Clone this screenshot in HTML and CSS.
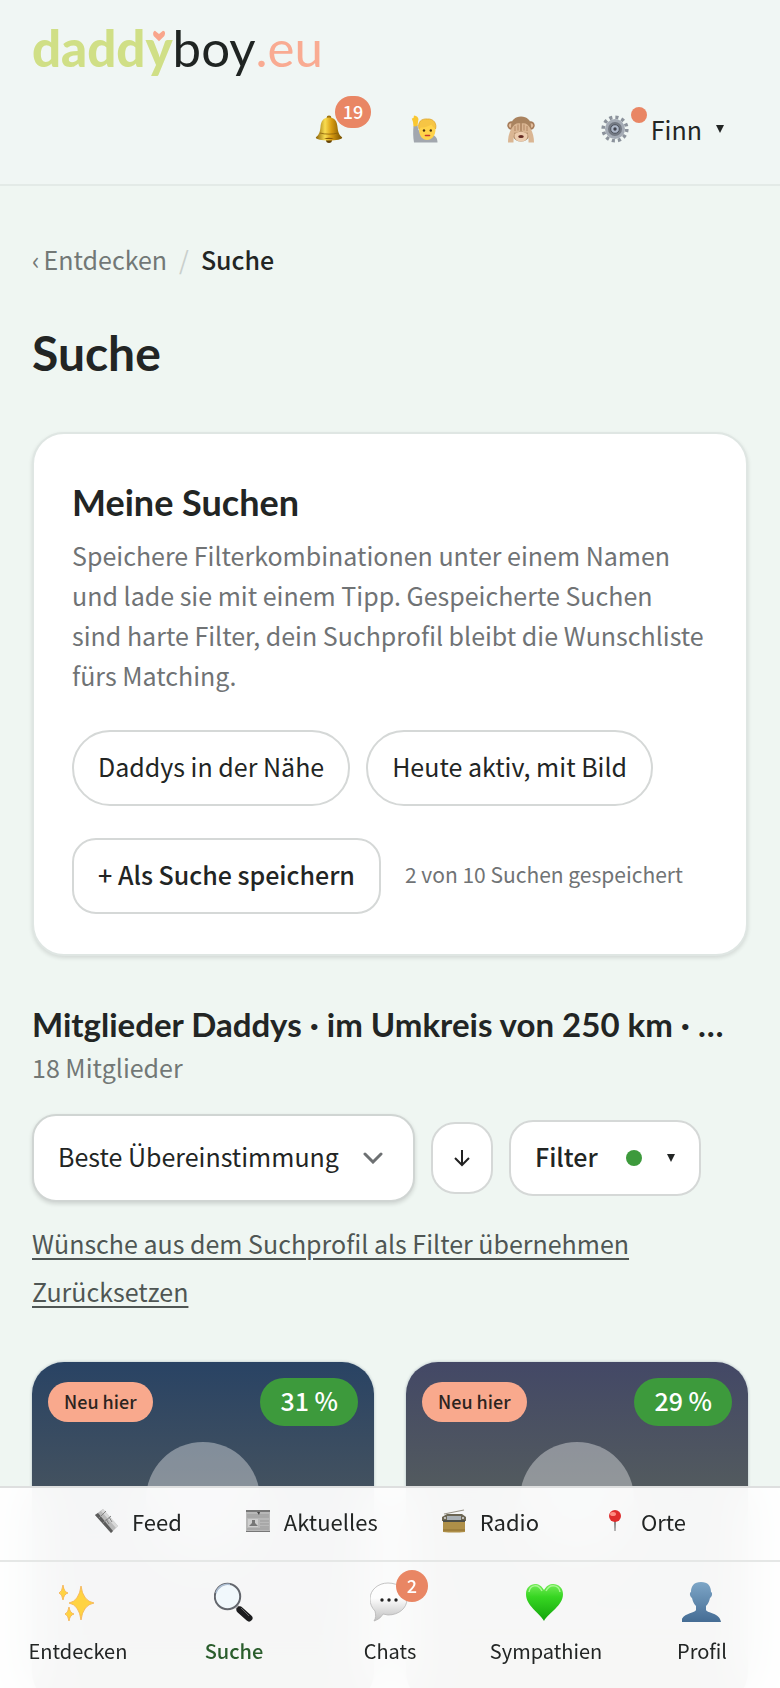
FILE: index.html
```html
<!DOCTYPE html>
<html lang="de">
<head>
<meta charset="utf-8">
<meta name="viewport" content="width=device-width, initial-scale=1">
<title>Suche – daddyboy.eu</title>
<link rel="stylesheet" href="styles.css">
</head>
<body>
<div class="app">
  <header class="header">
    <a class="logo" href="#"><span class="logo-daddy">daddy<svg class="logo-heart" viewBox="0 0 18 18" aria-hidden="true"><path d="M9 17 1 9C-1 5 1 1 3 1l6 5 6-5c3 0 4 4 2 8z" fill="#f9a58c"/></svg></span><span class="logo-boy">boy</span><span class="logo-eu">.eu</span></a>
    <div class="actions">
      <a class="action" href="#" aria-label="Benachrichtigungen">
        <svg class="icon" viewBox="0 0 28 28"><defs><linearGradient id="gold" x1="0" x2="1"><stop offset="0" stop-color="#8b6207"/><stop offset=".35" stop-color="#f9dc50"/><stop offset=".6" stop-color="#d89b10"/><stop offset="1" stop-color="#765000"/></linearGradient></defs><circle cx="14" cy="3" r="2.4" fill="#9b710f"/><circle cx="14" cy="25" r="3" fill="#654205"/><path d="M14 2.500c-6 0-8 4-8.500 9.500C5 18 3.500 20 .8 22.500c0 2 6 3 13.200 3s13.200-1 13.200-3C24.500 20 23 18 22.500 12 22 6.500 20 2.500 14 2.500z" fill="url(#gold)"/><path d="M5 18c5 1.500 13 1.500 18 0" fill="none" stroke="#8a5f0a" stroke-width=".8"/><path d="M9 24q5-2.500 10 0" fill="#8a5b09"/></svg>
        <span class="badge badge-bell">19</span>
      </a>
      <a class="action" href="#" aria-label="Anfragen">
        <svg class="icon" viewBox="0 0 28 28"><path d="M3 27.500C2 22 2 16 2.500 11l4-1c.5 5 2 8 5.500 9.500h8c5 1 6.500 4 6.500 8z" fill="#a2a7ae"/><path d="M2.500 11.500 2 7 .8 3.500 2.500 3l.5-2.500L5 1l1.500 1 1 2-.5 3-.5 4z" fill="#f9c731"/><path d="M8 14c0-6 3-9 8-9s8.500 3 8.500 9c0 7-4 11-8.500 11s-8-4-8-11z" fill="#ffd34a"/><path d="M8 14c-1.500-7 2-10.500 8.500-10C23 3.500 26 9 24.500 14c-2-1.500-3.500-3-4-4.500-4 2.500-8 3-10.500 3z" fill="#f6c544"/><path d="M8 14c-1.500-7 2-10.500 8.500-10C23 3.500 26 9 24.500 14" fill="none" stroke="#e0a325" stroke-width=".8"/><circle cx="13" cy="15.500" r="1.200" fill="#4a3010"/><circle cx="19.800" cy="15.500" r="1.200" fill="#4a3010"/><path d="M14.500 20.500h4" stroke="#c5392c" stroke-width="1.600" stroke-linecap="round"/></svg>
      </a>
      <a class="action" href="#" aria-label="Diskretmodus">
        <svg class="icon" viewBox="0 0 28 28"><circle cx="4.500" cy="10.500" r="4.200" fill="#a57a58"/><circle cx="23.500" cy="10.500" r="4.200" fill="#a57a58"/><circle cx="4" cy="10.500" r="2.200" fill="#e2bd9c"/><circle cx="24" cy="10.500" r="2.200" fill="#e2bd9c"/><path d="M4 12C4 5 8 1.500 14 1.500S24 5 24 12s-2 14.500-10 14.500S4 19 4 12z" fill="#a9835f"/><path d="M7.500 19q6.500-5 13 0v3q-1.500 4.500-6.500 4.500T7.500 22z" fill="#ecccae"/><path d="M1 27.500c0-5 1-10 3.500-14C7 9 10 7.500 13.500 8.500v7C12 18 9 18 7.500 17.500c-1 3-1 7-1 10z" fill="#dab693"/><path d="M27 27.500c0-5-1-10-3.500-14C21 9 18 7.500 14.500 8.500v7c1.500 2.500 4.500 2.500 6 2 1 3 1 7 1 10z" fill="#dab693"/><path d="M11 9.500v6m-3-4.500v5m9-6.500v6m3-4.500v5M14 8.500v7" stroke="#a07350" stroke-width=".7"/><ellipse cx="14" cy="21.500" rx="2.800" ry="1.500" fill="#652b22"/></svg>
      </a>
      <a class="action action-user" href="#">
        <span class="user-icon"><svg class="icon" viewBox="0 0 28 28" aria-hidden="true"><circle cx="14" cy="14" r="11.800" fill="none" stroke="#8b929b" stroke-width="3.600" stroke-dasharray="3.100 3.080"/><circle cx="14" cy="14" r="8.500" fill="#737983" stroke="#a4abb5" stroke-width="3"/><circle cx="14" cy="14" r="4.300" fill="#aeb8c9" stroke="#4e545f" stroke-width="1"/><circle cx="14" cy="14" r="1.700" fill="#41444f"/></svg><span class="user-dot"></span></span>
        <span class="user-name">Finn</span>
        <svg class="caret" viewBox="0 0 8 8" aria-hidden="true"><path d="M0 0h8L4 8z"/></svg>
      </a>
    </div>
  </header>

  <main class="content">
    <nav class="crumbs" aria-label="Brotkrumen"><a class="crumb-back" href="#"><span>‹</span><span>Entdecken</span></a><span class="crumb-sep">/</span><span class="crumb-here">Suche</span></nav>
    <h1 class="page-title">Suche</h1>

    <section class="panel">
      <h2 class="panel-title">Meine Suchen</h2>
      <p class="panel-text">Speichere Filterkombinationen unter einem Namen und lade sie mit einem Tipp. Gespeicherte Suchen sind harte Filter, dein Suchprofil bleibt die Wunschliste fürs Matching.</p>
      <div class="chips">
        <button class="chip" type="button">Daddys in der Nähe</button>
        <button class="chip" type="button">Heute aktiv, mit Bild</button>
      </div>
      <div class="save">
        <button class="btn" type="button">+ Als Suche speichern</button>
        <span class="save-note">2 von 10 Suchen gespeichert</span>
      </div>
    </section>

    <h2 class="result-title">Mitglieder Daddys · im Umkreis von 250 km · …</h2>
    <p class="result-count">18 Mitglieder</p>

    <div class="tools">
      <div class="sort">
        <select class="sort-select" aria-label="Sortierung"><option>Beste Übereinstimmung</option></select>
        <svg class="sort-chevron" viewBox="0 0 20 12" aria-hidden="true"><path d="m2 2 8 8 8-8" fill="none" stroke="#6d7072" stroke-width="3" stroke-linecap="round"/></svg>
      </div>
      <button class="btn-dir" type="button" aria-label="Absteigend"><svg class="arrow" viewBox="0 0 16 18"><path d="M8 1v15M1 9l7 7 7-7" fill="none" stroke="#222" stroke-width="2"/></svg></button>
      <button class="btn btn-filter" type="button"><span class="filter-label">Filter</span><span class="filter-dot"></span><svg class="caret" viewBox="0 0 8 8" aria-hidden="true"><path d="M0 0h8L4 8z"/></svg></button>
    </div>
    <div class="links">
      <a href="#">Wünsche aus dem Suchprofil als Filter übernehmen</a>
      <a href="#">Zurücksetzen</a>
    </div>

    <div class="members">
      <article class="member member-blue"><div class="member-top"><span class="tag">Neu hier</span><span class="match">31 %</span></div><div class="avatar"></div></article>
      <article class="member member-violet"><div class="member-top"><span class="tag">Neu hier</span><span class="match">29 %</span></div><div class="avatar"></div></article>
    </div>
  </main>
</div>

<div class="bottom">
  <nav class="subnav" aria-label="Inhalte">
    <a href="#"><svg class="icon-s" viewBox="0 0 24 24" aria-hidden="true"><path d="M1 6 9 0l15 17-7 7z" fill="#b9b9b9"/><path d="M1 6 17 24l2-2L4 4z" fill="#5b5b5b"/><path d="M9 0l15 17-2 2L7 2z" fill="#d9d9d9"/><path d="m5 9 7-7m-3 12 8-7m-5 3 3 5m0-7 3 5" stroke="#858585"/></svg>Feed</a>
    <a href="#"><svg class="icon-s" viewBox="0 0 24 24" aria-hidden="true"><path d="M0 1h24v22H0z" fill="#b8b8b8"/><path d="M0 1h24v2H0zM0 22h24v1H0z" fill="#777"/><path d="M1 6h22M1 8h22M14 12h9M14 15h9M14 18h9M1 20h22" stroke="#999"/><path d="M2 10h10v8H2z" fill="#cecece"/><path d="m3 17 3-3V11h3v3l3 3z" fill="#777"/><path d="M11 3h3l-1 3z" fill="#444"/></svg>Aktuelles</a>
    <a href="#"><svg class="icon-s" viewBox="0 0 24 24" aria-hidden="true"><path d="M2 5 22 1" stroke="#9b9689" stroke-width="1.200"/><path d="M5 5h15l4 3v4H0V8z" fill="#6c6653"/><path d="M1 11h22v12q-11 1-22 0z" fill="#ae8f48"/><path d="M1 11h22v2H1z" fill="#4c4d46"/><path d="M5 7h14v4H5z" fill="#aab1b5"/><path d="M1 21h22" stroke="#8e6f2e"/><circle cx="3" cy="9" r="1" fill="#ddd"/><circle cx="21" cy="9" r="1" fill="#ddd"/></svg>Radio</a>
    <a href="#"><svg class="icon-s" viewBox="0 0 24 24" aria-hidden="true"><path d="M11 10h2l-.5 12h-1z" fill="#777"/><circle cx="12" cy="7" r="6" fill="#df2d2d"/><ellipse cx="10" cy="5" rx="3" ry="2" fill="#ff8d83"/></svg>Orte</a>
  </nav>
  <nav class="tabs" aria-label="Hauptnavigation">
    <a href="#"><svg class="icon-l" viewBox="0 0 40 40" aria-hidden="true"><g fill="#ffd342" stroke="#f5a83c" stroke-width=".7"><path d="M23 4q2 15 13 17-11 2-13 17-2-15-12-17Q21 19 23 4z"/><path d="M5 3q1 7 5 8-4 1-5 7-1-6-4-7 3-1 4-8z"/><path d="M11 25q1 6 5 7-4 1-5 7-1-6-4-7 3-1 4-7z"/></g></svg>Entdecken</a>
    <a class="tab-on" href="#"><svg class="icon-l" viewBox="0 0 40 40" aria-hidden="true"><path d="m23 25 3 3" stroke="#777" stroke-width="4"/><path d="m26 28 9 8" stroke="#1c1c1e" stroke-width="7" stroke-linecap="round"/><path d="m27 26 8 8" stroke="#666" stroke-width="1"/><circle cx="13.500" cy="14.500" r="12.700" fill="#f1f8fc" stroke="#63666d" stroke-width="2"/><path d="M2 11A12 12 0 0 1 16 2.500" fill="none" stroke="#aebfd3" stroke-width="1.500"/></svg>Suche</a>
    <a href="#"><span class="chat"><svg class="icon-l" viewBox="0 0 40 40" aria-hidden="true"><defs><linearGradient id="bubble" x2="0" y2="1"><stop offset=".4" stop-color="#fdfdfd"/><stop offset="1" stop-color="#bfbfbf"/></linearGradient></defs><path d="M18 1c11 0 19 7 19 16s-8 16-19 16l-5-1c-2 4-6 6-9 7 2-3 2-6 1-10-3-3-5-7-5-12C0 8 8 1 18 1z" fill="url(#bubble)" stroke="#b5b5b5" stroke-width=".8"/><circle cx="12" cy="18" r="1.700" fill="#222"/><circle cx="19" cy="18" r="1.700" fill="#222"/><circle cx="26" cy="18" r="1.700" fill="#222"/></svg><span class="badge badge-chat">2</span></span>Chats</a>
    <a href="#"><svg class="icon-l" viewBox="0 0 40 40" aria-hidden="true"><defs><linearGradient id="green" x2="0" y2="1"><stop stop-color="#74ec58"/><stop offset=".35" stop-color="#37d622"/><stop offset="1" stop-color="#12a40c"/></linearGradient></defs><path d="M18 39C13 30 0 24 0 12 0 1 13-2 18 8 23-2 37 1 37 12c0 12-14 18-19 27z" fill="url(#green)"/><path d="M3 10c1-7 9-9 13-1M20 9c4-8 13-6 14 1" fill="none" stroke="#a7f792" stroke-width="1.500"/></svg>Sympathien</a>
    <a href="#"><svg class="icon-l" viewBox="0 0 40 40" aria-hidden="true"><defs><linearGradient id="bust" x2="0" y2="1"><stop stop-color="#7da6c7"/><stop offset="1" stop-color="#456c94"/></linearGradient></defs><path d="M19 0c7 0 10 4 10 10 2 1 1 5-1 6-1 4-2 6-4 8v4c1 3 14 3 15 12H-1c1-9 14-9 15-12v-4c-2-2-3-4-4-8-2-1-3-5-1-6C9 4 12 0 19 0z" fill="url(#bust)"/></svg>Profil</a>
  </nav>
</div>
</body>
</html>
```
FILE: styles.css
```css
* { box-sizing: border-box; }

body {
  margin: 0;
  background: #eff6f2;
  color: #222524;
  font: 25px/40px "Noto Sans CJK SC", "Noto Sans", sans-serif;
}

a { color: inherit; text-decoration: none; }
h1, h2, p { margin: 0; }
svg { display: block; flex: none; }
button, select { font: inherit; color: inherit; cursor: pointer; }

.app {
  height: 100vh;
  overflow-x: hidden;
  overflow-y: auto;
  scrollbar-width: none;
}

/* Header */
.header {
  padding: 16px 56px 16px 32px;
  border-bottom: 2px solid #e3eae7;
  background: #f0f6f4;
}

.logo {
  display: inline-flex;
  height: 64px;
  font: 51px/64px Lato, sans-serif;
}

.logo-daddy { position: relative; color: #d0df86; font-weight: 900; }
.logo-boy { color: #1f2422; }
.logo-eu { color: #f9ab92; }

.logo-heart {
  position: absolute;
  top: 14px;
  right: 8px;
  width: 12px;
  height: 12px;
}

.actions {
  display: flex;
  justify-content: flex-end;
  align-items: center;
  height: 88px;
  padding-top: 10px;
}

.action {
  position: relative;
  display: flex;
  justify-content: center;
  align-items: center;
  width: 96px;
}

.action-user { width: auto; padding-left: 32px; }
.user-icon { position: relative; margin-right: 22px; }
.user-name { margin-right: 14px; }
.icon { width: 28px; height: 28px; }
.caret { width: 8px; height: 8px; fill: #222524; }

.badge {
  position: absolute;
  height: 32px;
  min-width: 32px;
  border-radius: 16px;
  background: #e98664;
  color: #fff;
  font-size: 18px;
  font-weight: 500;
  line-height: 30px;
  text-align: center;
}

.badge-bell { top: -19px; left: 54px; padding: 0 8px; }

.user-dot {
  position: absolute;
  top: -8px;
  right: -18px;
  width: 16px;
  height: 16px;
  border-radius: 50%;
  background: #e98664;
}

/* Content */
.content { padding: 53px 32px 220px; }

.crumbs { display: flex; gap: 12px; color: #727876; }
.crumb-back { display: flex; gap: 4px; }
.crumb-sep { color: #c9cfcc; }
.crumb-here { color: #222524; font-weight: 500; }

.page-title {
  margin-top: 42px;
  font: 700 48px/64px Lato, sans-serif;
}

.panel {
  margin-top: 47px;
  padding: 40px 38px;
  border: 2px solid #dfe6e3;
  border-radius: 32px;
  background: #fff;
  box-shadow: 0 2px 4px rgba(0, 0, 0, .12);
}

.panel-title { font: 700 36px/56px Lato, sans-serif; }
.panel-text { margin-top: 5px; padding-right: 4px; color: #707375; }

.chips { display: flex; flex-wrap: wrap; gap: 16px; margin-top: 35px; }

.chip, .btn {
  height: 76px;
  padding: 0 24px 4px;
  border: 2px solid #d5d8d7;
  border-radius: 38px;
  background: #fff;
}

.btn { border-radius: 24px; font-weight: 500; }

.save { display: flex; align-items: center; gap: 24px; margin-top: 32px; }
.save-note { padding-bottom: 4px; color: #707375; font-size: 21px; }

.result-title {
  margin-top: 44px;
  font: 700 33px/48px Lato, sans-serif;
  white-space: nowrap;
}

.result-count { margin-top: -1px; color: #727876; }

.tools { display: flex; align-items: center; gap: 16px; margin-top: 27px; }

.sort { display: grid; align-items: center; }

.sort-select {
  grid-area: 1 / 1;
  height: 88px;
  padding: 0 74px 4px 24px;
  appearance: none;
  border: 2px solid #d0d5d3;
  border-radius: 24px;
  background: #fff;
  box-shadow: 0 2px 4px rgba(0, 0, 0, .14);
}

.sort-chevron {
  grid-area: 1 / 1;
  justify-self: end;
  width: 20px;
  height: 12px;
  margin-right: 32px;
  pointer-events: none;
}

.btn-dir {
  display: grid;
  place-items: center;
  width: 62px;
  height: 72px;
  padding: 0;
  border: 2px solid #d5d8d7;
  border-radius: 24px;
  background: #fff;
}

.arrow { width: 16px; height: 18px; }

.btn-filter { display: flex; align-items: center; padding-bottom: 0; }
.filter-label { padding-bottom: 4px; }

.filter-dot {
  width: 16px;
  height: 16px;
  margin: 0 25px 0 28px;
  border-radius: 50%;
  background: #3d9a3c;
}

.links {
  display: flex;
  flex-direction: column;
  align-items: flex-start;
  margin-top: 17px;
  color: #4f5654;
  line-height: 48px;
}

.links a {
  text-decoration: underline;
  text-decoration-thickness: 2px;
  text-underline-offset: 4px;
}

.members {
  display: grid;
  grid-template-columns: 1fr 1fr;
  gap: 32px;
  margin-top: 47px;
}

.member {
  aspect-ratio: 1;
  padding: 16px;
  border-radius: 32px;
  box-shadow: 0 0 3px rgba(20, 50, 80, .3);
}

.member-blue { background: linear-gradient(#294364, #44525f 38%, #5e5f58); }
.member-violet { background: linear-gradient(#434866, #535b5e 38%, #62665a); }

.member-top { display: flex; justify-content: space-between; align-items: center; }

.tag {
  height: 40px;
  padding: 0 16px;
  border-radius: 20px;
  background: #f9a98d;
  color: #2c2420;
  font-size: 18px;
  font-weight: 500;
  line-height: 38px;
}

.match {
  height: 48px;
  padding: 0 20px;
  border-radius: 24px;
  background: #3d9a3c;
  color: #fff;
  font-weight: 500;
  line-height: 44px;
}

.avatar {
  width: 114px;
  height: 114px;
  margin: 16px auto 0;
  border-radius: 50%;
  background: rgba(255, 255, 255, .37);
}

/* Bottom navigation */
.bottom {
  position: fixed;
  right: 0;
  bottom: 0;
  left: 0;
  border-top: 2px solid #dedfdf;
  background: rgba(255, 255, 255, .95);
  backdrop-filter: blur(24px);
}

.subnav {
  display: flex;
  justify-content: center;
  gap: 64px;
  padding: 13px 0 19px;
  border-bottom: 2px solid #e5e7e6;
  font-size: 22px;
}

.subnav a { display: flex; align-items: center; gap: 14px; }
.icon-s { width: 24px; height: 24px; }

.tabs {
  display: grid;
  grid-template-columns: repeat(5, 1fr);
  padding: 20px 0 17px;
  font-size: 20px;
}

.tabs a { display: flex; flex-direction: column; align-items: center; gap: 9px; }
.tabs .tab-on { color: #2a5d2c; font-weight: 500; }
.icon-l { width: 40px; height: 40px; }
.chat { position: relative; }
.badge-chat { top: -12px; left: 26px; }
```
